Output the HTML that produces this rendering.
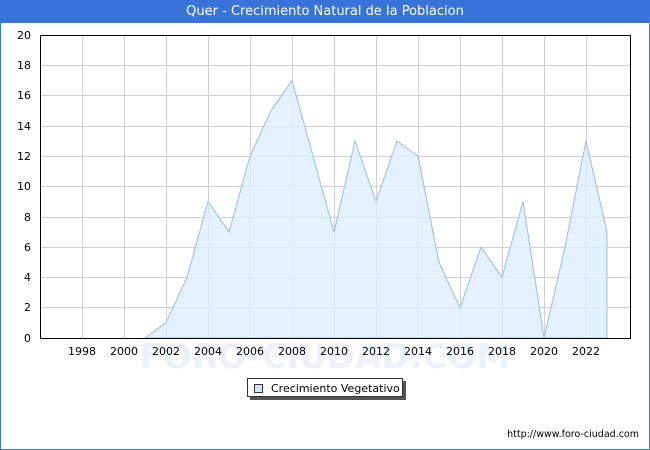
<!DOCTYPE html>
<html><head><meta charset="utf-8"><style>
html,body{margin:0;padding:0;background:#fff}
body{width:650px;height:450px;position:relative;overflow:hidden;font-family:"DejaVu Sans","Liberation Sans",sans-serif}
.frame{position:absolute;left:0;top:0;width:648px;height:448px;border:1px solid #3773d9}
.title{position:absolute;left:0;top:0;width:650px;height:23px;background:#3773d9;color:#fff;font-size:13px;text-align:center;line-height:23px}
</style></head><body>
<div class="frame"></div>
<div class="title">Quer - Crecimiento Natural de la Poblacion</div>
<svg width="650" height="450" style="position:absolute;left:0;top:0" font-family="DejaVu Sans, Liberation Sans, sans-serif" font-size="11">
<g stroke="#d0d0d0" stroke-width="1">
<line x1="82.5" y1="35" x2="82.5" y2="338"/><line x1="124.5" y1="35" x2="124.5" y2="338"/><line x1="166.5" y1="35" x2="166.5" y2="338"/><line x1="208.5" y1="35" x2="208.5" y2="338"/><line x1="250.5" y1="35" x2="250.5" y2="338"/><line x1="292.5" y1="35" x2="292.5" y2="338"/><line x1="334.5" y1="35" x2="334.5" y2="338"/><line x1="376.5" y1="35" x2="376.5" y2="338"/><line x1="418.5" y1="35" x2="418.5" y2="338"/><line x1="460.5" y1="35" x2="460.5" y2="338"/><line x1="502.5" y1="35" x2="502.5" y2="338"/><line x1="544.5" y1="35" x2="544.5" y2="338"/><line x1="586.5" y1="35" x2="586.5" y2="338"/>
<line x1="40" y1="65.5" x2="630" y2="65.5"/><line x1="40" y1="95.5" x2="630" y2="95.5"/><line x1="40" y1="126.5" x2="630" y2="126.5"/><line x1="40" y1="156.5" x2="630" y2="156.5"/><line x1="40" y1="186.5" x2="630" y2="186.5"/><line x1="40" y1="217.5" x2="630" y2="217.5"/><line x1="40" y1="247.5" x2="630" y2="247.5"/><line x1="40" y1="277.5" x2="630" y2="277.5"/><line x1="40" y1="307.5" x2="630" y2="307.5"/>
</g>
<text x="325" y="368" font-size="34" fill="#eef2f8" text-anchor="middle" font-weight="bold">FORO-CIUDAD.COM</text>
<polygon fill="#ddeeff" fill-opacity="0.8" stroke="#9bbbe8" stroke-width="1" points="145,338 166,322.8 187,277.4 208,201.6 229,232 250,156.2 271,110.8 292,80.5 313,156.2 334,232 355,141 376,201.6 397,141 418,156.2 439,262.3 460,307.7 481,247 502,277.4 523,201.6 544,338 565,247 586,141 607,232 607,338"/>
<rect x="40.5" y="35.5" width="590" height="303" fill="none" stroke="#000" stroke-width="1"/>
<g text-anchor="end" fill="#000">
<text x="31" y="39">20</text><text x="31" y="69">18</text><text x="31" y="99">16</text><text x="31" y="130">14</text><text x="31" y="160">12</text><text x="31" y="190">10</text><text x="31" y="221">8</text><text x="31" y="251">6</text><text x="31" y="281">4</text><text x="31" y="311">2</text><text x="31" y="342">0</text>
</g>
<g text-anchor="middle" fill="#000">
<text x="82" y="355">1998</text><text x="124" y="355">2000</text><text x="166" y="355">2002</text><text x="208" y="355">2004</text><text x="250" y="355">2006</text><text x="292" y="355">2008</text><text x="334" y="355">2010</text><text x="376" y="355">2012</text><text x="418" y="355">2014</text><text x="460" y="355">2016</text><text x="502" y="355">2018</text><text x="544" y="355">2020</text><text x="586" y="355">2022</text>
</g>
<rect x="250" y="381" width="156" height="19" fill="#555"/>
<rect x="247.5" y="378.5" width="155" height="18" fill="#fff" stroke="#333"/>
<rect x="254.5" y="384.5" width="8" height="8" fill="#cce4ff" stroke="#333"/>
<text x="271" y="392" fill="#000">Crecimiento Vegetativo</text>
<text x="639" y="437" font-size="9.5" text-anchor="end" fill="#000">http://www.foro-ciudad.com</text>
</svg>
</body></html>
